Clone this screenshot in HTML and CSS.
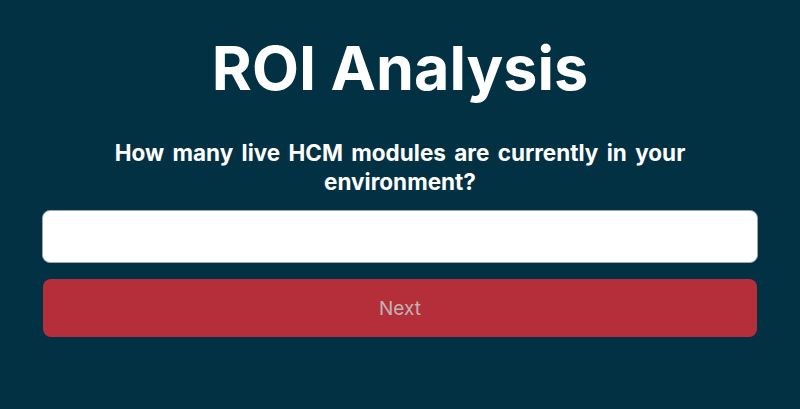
FILE: index.html
```html
<!DOCTYPE html>
<html lang="en">
<head>
<meta charset="utf-8">
<title>ROI Analysis</title>
<link rel="stylesheet" href="styles.css">
</head>
<body>
<main class="page">
  <h1 class="title">ROI Analysis</h1>
  <label class="question" for="modules">How many live HCM modules are currently in your environment?</label>
  <input class="answer" id="modules" type="text">
  <button class="next" type="button" disabled>Next</button>
</main>
</body>
</html>
```

FILE: styles.css
```css
html, body {
  margin: 0;
  padding: 0;
  background: #023143;
  height: 100%;
}
.page {
  display: flex;
  flex-direction: column;
  align-items: stretch;
  padding: 28px 42px 0 42px;
  font-family: Inter, "Noto Sans", sans-serif;
  color: #ffffff;
}
.title {
  margin: 0;
  text-align: center;
  font-size: 61px;
  line-height: 80px;
  font-weight: 700;
}
.question {
  margin: 30px 50px 0;
  text-align: center;
  font-family: Inter, "Noto Sans", sans-serif;
  font-size: 22.5px;
  line-height: 29px;
  font-weight: 700;
  word-spacing: 3px;
}
.answer {
  margin: 14px 0 0;
  height: 53px;
  box-sizing: border-box;
  border: 1px solid #9aa7b0;
  border-radius: 8px;
  background: #ffffff;
  font-size: 18px;
  padding: 0 14px;
  outline: none;
}
.next {
  margin: 16px 1px 0;
  height: 58px;
  border: none;
  border-radius: 8px;
  background: #b52f3b;
  color: #bdb5b4;
  font-family: Inter, "Noto Sans", sans-serif;
  font-size: 19px;
}
```
